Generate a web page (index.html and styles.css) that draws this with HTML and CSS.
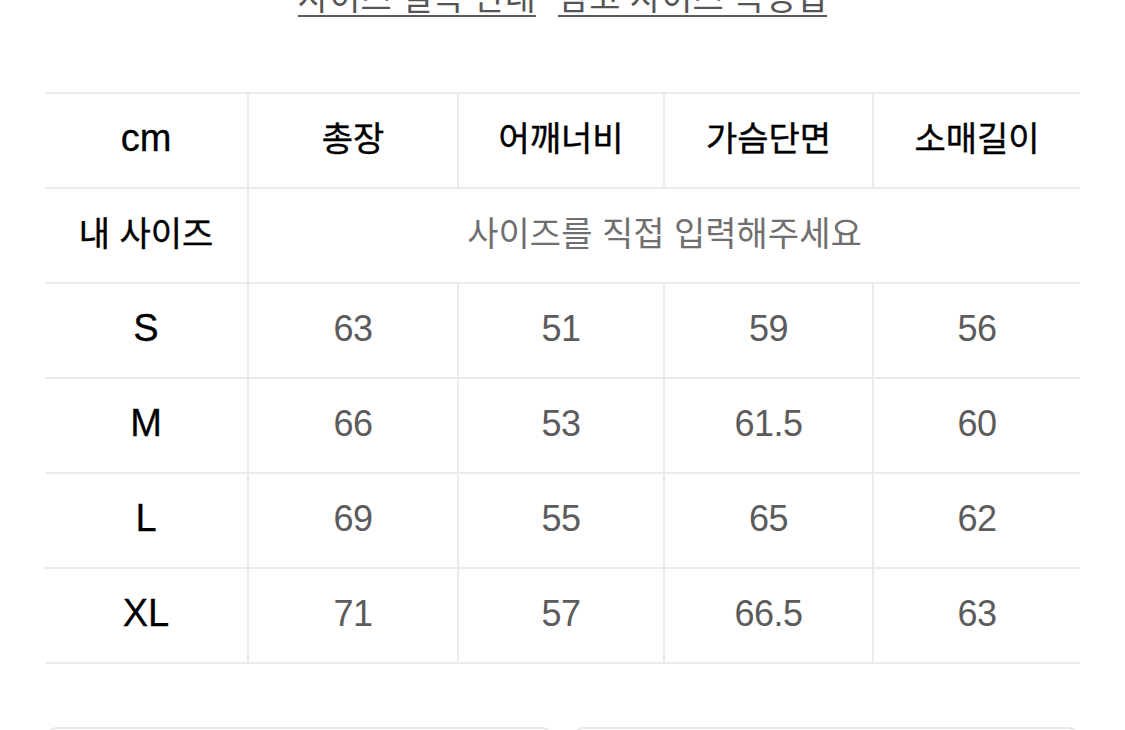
FILE: index.html
```html
<!DOCTYPE html>
<html lang="ko">
<head>
<meta charset="utf-8">
<title>사이즈</title>
<link rel="stylesheet" href="styles.css">
</head>
<body>
<div class="page">
  <div class="top-links">
    <a class="link" href="#">사이즈 실측 안내</a>
    <a class="link" href="#">참고 사이즈 측정법</a>
  </div>
  <div class="size-table">
    <div class="cell head latin">cm</div>
    <div class="cell col head">총장</div>
    <div class="cell col head">어깨너비</div>
    <div class="cell col head">가슴단면</div>
    <div class="cell col head">소매길이</div>

    <div class="cell head">내 사이즈</div>
    <div class="cell col wide hint">사이즈를 직접 입력해주세요</div>

    <div class="cell head latin">S</div>
    <div class="cell col val">63</div>
    <div class="cell col val">51</div>
    <div class="cell col val">59</div>
    <div class="cell col val">56</div>

    <div class="cell head latin">M</div>
    <div class="cell col val">66</div>
    <div class="cell col val">53</div>
    <div class="cell col val">61.5</div>
    <div class="cell col val">60</div>

    <div class="cell head latin">L</div>
    <div class="cell col val">69</div>
    <div class="cell col val">55</div>
    <div class="cell col val">65</div>
    <div class="cell col val">62</div>

    <div class="cell head latin">XL</div>
    <div class="cell col val">71</div>
    <div class="cell col val">57</div>
    <div class="cell col val">66.5</div>
    <div class="cell col val">63</div>
  </div>
  <div class="actions">
    <div class="btn"></div>
    <div class="btn"></div>
  </div>
</div>
</body>
</html>
```

FILE: styles.css
```css
html, body {
  margin: 0;
  padding: 0;
  background: #ffffff;
  overflow: hidden;
}

body {
  font-family: "Noto Sans CJK KR", "Liberation Sans", sans-serif;
  color: #111111;
}

.page {
  width: 1125px;
  height: 730px;
  padding: 0 45px;
  box-sizing: border-box;
}

.top-links {
  height: 92px;
  display: flex;
  justify-content: center;
  align-items: flex-start;
  gap: 22px;
}

.link {
  margin-top: -21px;
  font-size: 34px;
  line-height: 34px;
  color: #555555;
  text-decoration: underline;
  text-decoration-thickness: 2px;
  text-underline-offset: 5px;
  text-decoration-color: #5a5a5a;
}

.size-table {
  display: grid;
  grid-template-columns: 202px 210px 206px 209px 208px;
  grid-auto-rows: 95px;
  border-top: 2px solid #ebebeb;
}

.cell {
  box-sizing: border-box;
  border-bottom: 2px solid #ebebeb;
  display: flex;
  align-items: center;
  justify-content: center;
  font-size: 34px;
  padding-bottom: 8px;
}

.col {
  border-left: 2px solid #ebebeb;
}

.wide {
  grid-column: span 4;
}

.head {
  color: #000000;
  font-weight: 400;
  -webkit-text-stroke: 0.4px #000000;
}

.latin {
  font-family: "Liberation Sans", "Noto Sans CJK KR", sans-serif;
  font-size: 38px;
  padding-bottom: 4px;
  -webkit-text-stroke: 0.3px #000000;
}

.hint {
  color: #6f6f6f;
  font-weight: 400;
}

.val {
  font-family: "Liberation Sans", "Noto Sans CJK KR", sans-serif;
  color: #5c5c5c;
  font-size: 36px;
  letter-spacing: -0.5px;
  padding-bottom: 4px;
}

.actions {
  margin-top: 63px;
  display: flex;
  gap: 18px;
}

.btn {
  flex: 1;
  height: 60px;
  border: 2px solid #e8e8e8;
  border-radius: 12px;
}
```
